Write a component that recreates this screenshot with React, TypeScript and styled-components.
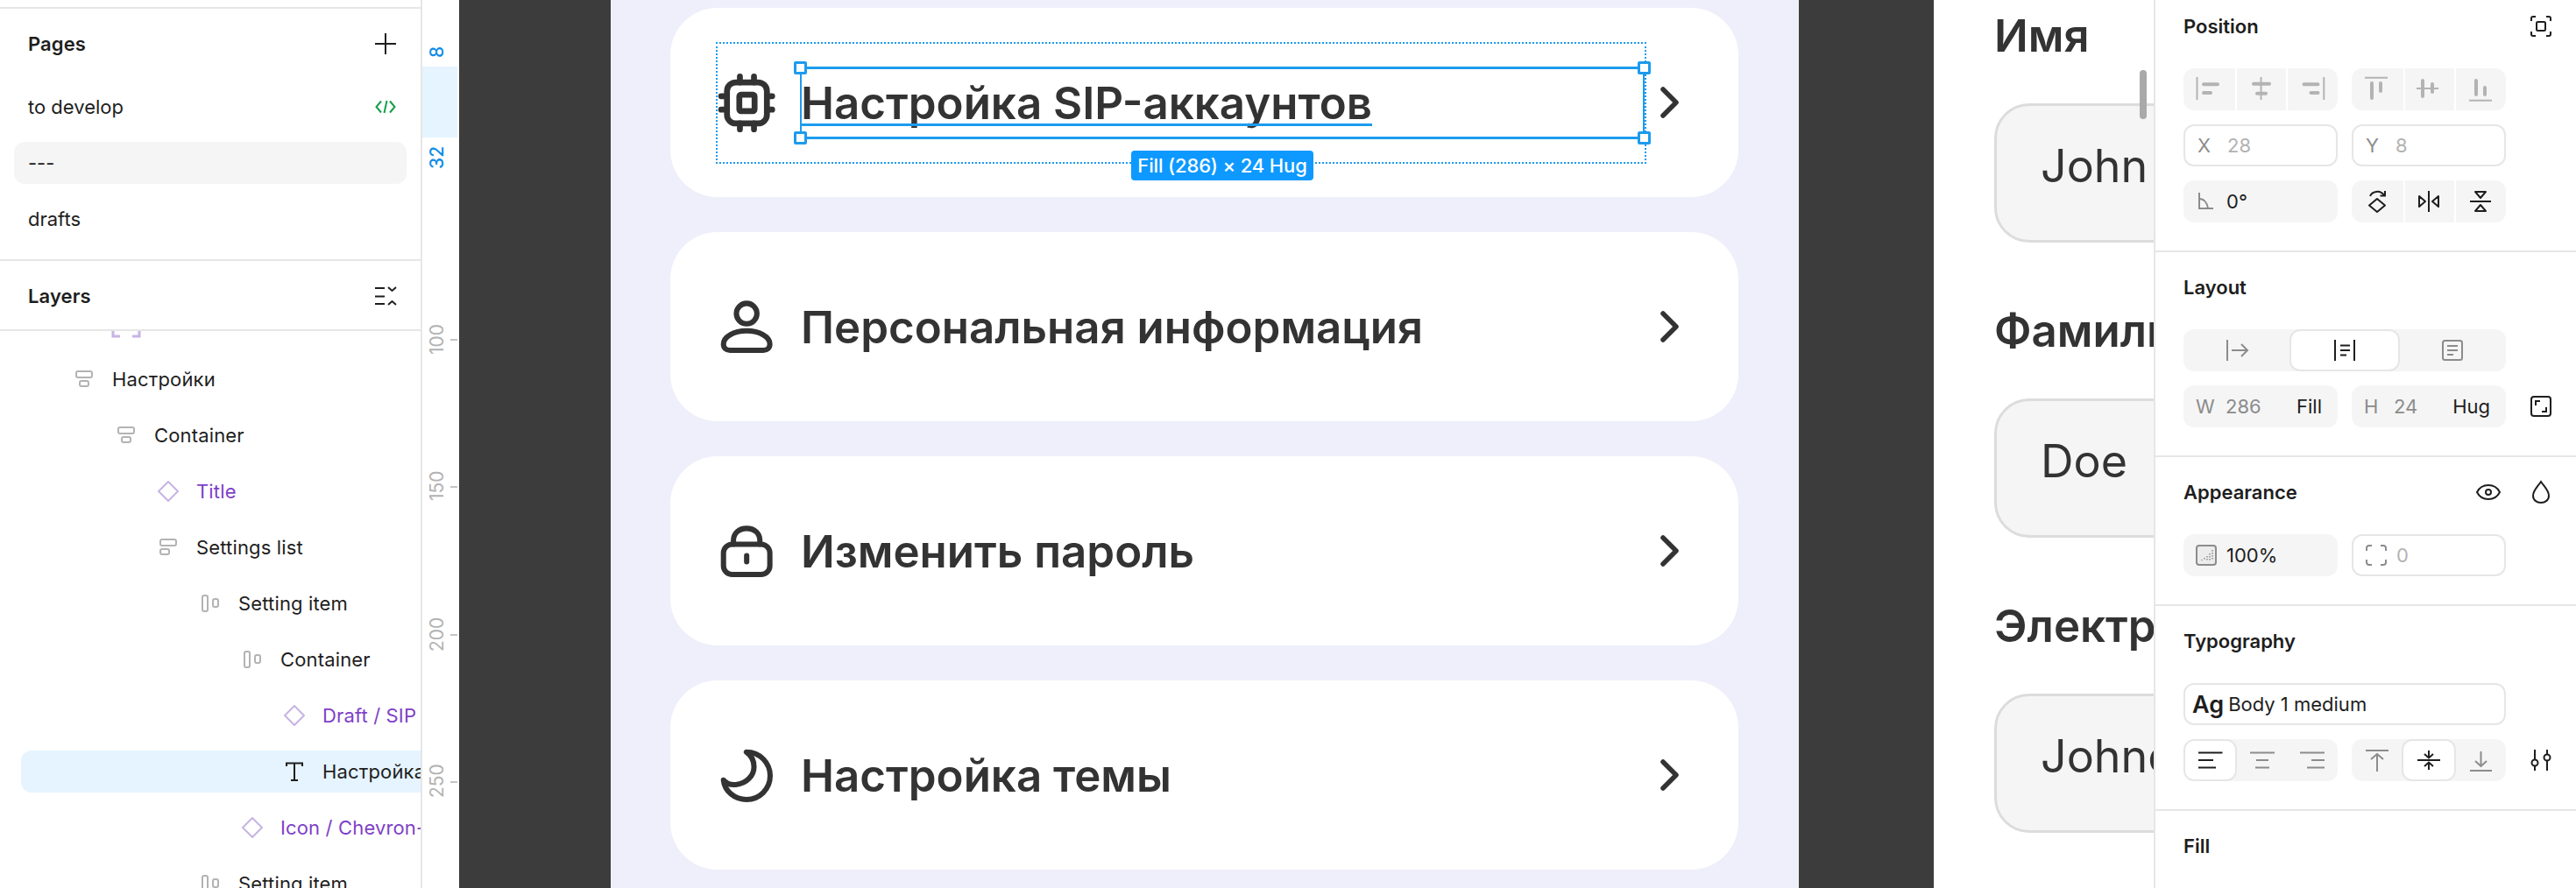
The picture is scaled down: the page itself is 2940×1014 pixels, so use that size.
import React from 'react';
import styled, { createGlobalStyle } from 'styled-components';

const GlobalStyle = createGlobalStyle`
  html, body {
    margin: 0;
    padding: 0;
    background: #ffffff;
    font-family: Inter, "Noto Sans", sans-serif;
    color: #1e1e1e;
  }
  * {
    box-sizing: border-box;
  }
`;

const Root = styled.div`
  display: flex;
  width: 2940px;
  height: 1014px;
  overflow: hidden;
  position: relative;
`;

/* ---------- left panel ---------- */
const LeftPanel = styled.aside`
  width: 482px;
  flex-shrink: 0;
  height: 100%;
  overflow: hidden;
  border-right: 2px solid #e6e6e6;
  display: flex;
  flex-direction: column;
`;
const TopStrip = styled.div`
  height: 10px;
  flex-shrink: 0;
  border-bottom: 2px solid #e6e6e6;
`;
const PagesSection = styled.section`
  height: 288px;
  flex-shrink: 0;
  padding-top: 16px;
  border-bottom: 2px solid #e6e6e6;
`;
const LayersHeader = styled.section`
  height: 80px;
  flex-shrink: 0;
  padding-top: 16px;
  border-bottom: 2px solid #e6e6e6;
`;
const PanelHeader = styled.div`
  height: 48px;
  padding: 0 28px 0 32px;
  display: flex;
  align-items: center;
  justify-content: space-between;
`;
const PanelTitle = styled.h2`
  margin: 0;
  font-size: 22px;
  font-weight: 600;
  letter-spacing: 0.1px;
  color: #1e1e1e;
`;
const PageList = styled.div`
  margin-top: 24px;
  display: flex;
  flex-direction: column;
  gap: 16px;
`;
const PageRow = styled.div<{ $active?: boolean }>`
  height: 48px;
  margin: 0 16px;
  padding: 0 12px 0 16px;
  border-radius: 12px;
  display: flex;
  align-items: center;
  justify-content: space-between;
  font-size: 22px;
  background: ${(p) => (p.$active ? '#f5f5f5' : 'transparent')};
`;
const LayerScroll = styled.div`
  flex: 1;
  min-height: 0;
  overflow: hidden;
`;
const LayerList = styled.div`
  margin-top: -33px;
  display: flex;
  flex-direction: column;
  gap: 16px;
`;
const LayerRow = styled.div<{ $level: number; $selected?: boolean }>`
  height: 48px;
  flex-shrink: 0;
  margin-left: 24px;
  padding-left: ${(p) => 56 + p.$level * 48}px;
  display: flex;
  align-items: center;
  gap: 16px;
  white-space: nowrap;
  border-radius: 12px 0 0 12px;
  background: ${(p) => (p.$selected ? '#e5f4ff' : 'transparent')};
`;
const LayerIconBox = styled.span`
  width: 32px;
  height: 32px;
  flex-shrink: 0;
  display: flex;
  align-items: center;
  justify-content: center;
`;
const LayerName = styled.span<{ $component?: boolean }>`
  font-size: 22px;
  letter-spacing: 0.15px;
  color: ${(p) => (p.$component ? '#7f3fc8' : '#1e1e1e')};
`;

/* ---------- ruler ---------- */
const Ruler = styled.div`
  width: 42px;
  height: 100%;
  flex-shrink: 0;
  position: relative;
  background: #ffffff;
`;
const RulerHighlight = styled.div`
  position: absolute;
  left: 0;
  width: 40px;
  top: 76px;
  height: 81px;
  background: #e5f4ff;
`;
const RulerLabel = styled.span<{ $y: number; $accent?: boolean }>`
  position: absolute;
  left: 4px;
  top: ${(p) => p.$y}px;
  width: 24px;
  height: 60px;
  margin-top: -30px;
  display: flex;
  align-items: center;
  justify-content: center;
  writing-mode: vertical-rl;
  transform: rotate(180deg);
  font-size: 21px;
  font-weight: ${(p) => (p.$accent ? 500 : 400)};
  color: ${(p) => (p.$accent ? '#0d8ce8' : '#b3b3b3')};
`;
const RulerTick = styled.i<{ $y: number }>`
  position: absolute;
  left: 32px;
  width: 8px;
  height: 2px;
  top: ${(p) => p.$y}px;
  background: #c4c4c4;
`;

/* ---------- canvas ---------- */
const Canvas = styled.main`
  flex: 1;
  min-width: 0;
  height: 100%;
  overflow: hidden;
  position: relative;
  background: #3c3c3c;
  display: flex;
  padding-left: 173px;
  gap: 154px;
`;
const Phone = styled.div`
  width: 1356px;
  height: 100%;
  flex-shrink: 0;
  padding: 9px 69px 0 68px;
  background: #efeffb;
  display: flex;
  flex-direction: column;
  gap: 40px;
`;
const Card = styled.div`
  height: 216px;
  flex-shrink: 0;
  padding-left: 54px;
  background: #ffffff;
  border-radius: 54px;
  display: flex;
  align-items: center;
`;
const CardBody = styled.div<{ $selected?: boolean }>`
  width: 1058px;
  flex-shrink: 0;
  height: 135px;
  display: flex;
  align-items: center;
  gap: 27px;
  position: relative;
  outline: ${(p) => (p.$selected ? '2px dotted #1c9bee' : 'none')};
`;
const CardIcon = styled.svg<{ $heavy?: boolean }>`
  width: 67px;
  height: 67px;
  flex-shrink: 0;
  fill: none;
  stroke: #333333;
  stroke-width: ${(p) => (p.$heavy ? 2 : 1.8)};
  stroke-linecap: round;
  stroke-linejoin: round;
`;
const CardText = styled.div<{ $selected?: boolean }>`
  flex: 1;
  height: 83px;
  display: flex;
  align-items: center;
  position: relative;
  text-indent: -1px;
  font-size: 51px;
  font-weight: 600;
  color: #333333;
  border-style: solid;
  border-width: 3px 2px;
  border-color: ${(p) => (p.$selected ? '#1c9bee' : 'transparent')};
`;
const Underlined = styled.span`
  position: relative;
  &::after {
    content: '';
    position: absolute;
    left: -1px;
    right: 0;
    bottom: 4px;
    height: 3px;
    background: #1c9bee;
  }
`;
const Handle = styled.i<{ $right?: boolean; $bottom?: boolean }>`
  position: absolute;
  width: 15px;
  height: 15px;
  background: #ffffff;
  border: 3px solid #1c9bee;
  border-radius: 2px;
  ${(p) => (p.$right ? 'right: -9px;' : 'left: -9px;')}
  ${(p) => (p.$bottom ? 'bottom: -9px;' : 'top: -9px;')}
`;
const SizeTag = styled.span`
  position: absolute;
  left: 50%;
  top: 93px;
  transform: translateX(-50%);
  width: 208px;
  height: 34px;
  display: flex;
  align-items: center;
  justify-content: center;
  background: #0d99ff;
  border-radius: 4px;
  color: #ffffff;
  font-size: 22px;
  font-weight: 500;
  letter-spacing: -0.15px;
  text-indent: 0;
  white-space: nowrap;
`;
const ChevronSvg = styled.svg`
  width: 56px;
  height: 56px;
  flex-shrink: 0;
  fill: none;
  stroke: #333333;
  stroke-width: 5.5;
  stroke-linecap: round;
  stroke-linejoin: round;
`;

/* second frame, runs under the right panel */
const SideFrame = styled.div`
  width: 900px;
  height: 100%;
  flex-shrink: 0;
  padding-left: 69px;
  background: #ffffff;
  display: flex;
  flex-direction: column;
  gap: 60px;
`;
const FieldGroup = styled.div`
  display: flex;
  flex-direction: column;
  gap: 37px;
`;
const FieldLabel = styled.div`
  height: 81px;
  display: flex;
  align-items: center;
  font-size: 51px;
  font-weight: 600;
  color: #333333;
  white-space: nowrap;
`;
const FieldBox = styled.div`
  height: 159px;
  padding: 0 0 16px 50px;
  display: flex;
  align-items: center;
  background: #f5f5f5;
  border: 3px solid #dcdcdc;
  border-radius: 40px;
  font-size: 52px;
  color: #333333;
  white-space: nowrap;
`;
const ScrollThumb = styled.i`
  position: absolute;
  left: 1918px;
  top: 80px;
  width: 8px;
  height: 56px;
  border-radius: 4px;
  background: #a9a9a9;
`;

/* ---------- right panel ---------- */
const RightPanel = styled.aside`
  width: 482px;
  flex-shrink: 0;
  height: 100%;
  overflow: hidden;
  position: relative;
  background: #ffffff;
  border-left: 2px solid #e6e6e6;
  margin-left: -2px;
`;
const Section = styled.section<{ $first?: boolean }>`
  padding: ${(p) => (p.$first ? '6px' : '16px')} 28px 32px 32px;
  border-bottom: 2px solid #e6e6e6;
  &:last-child {
    border-bottom: none;
  }
`;
const SectionHead = styled.div`
  height: 48px;
  margin-bottom: 24px;
  display: flex;
  align-items: center;
  gap: 34px;
`;
const SectionTitle = styled.h3`
  margin: 0 auto 0 0;
  font-size: 22px;
  font-weight: 600;
  color: #1e1e1e;
`;
const Rows = styled.div`
  display: flex;
  flex-direction: column;
  gap: 16px;
`;
const Row = styled.div`
  display: flex;
  align-items: center;
  gap: 16px;
`;
const SideIcon = styled.span`
  display: flex;
  margin-left: 12px;
`;
const Segmented = styled.div<{ $wide?: boolean }>`
  width: ${(p) => (p.$wide ? '368px' : '176px')};
  height: 48px;
  display: flex;
  background: #f5f5f5;
  border-radius: 12px;
  overflow: hidden;
`;
const Segment = styled.div<{ $active?: boolean; $split?: boolean }>`
  flex: 1;
  display: flex;
  align-items: center;
  justify-content: center;
  background: ${(p) => (p.$active ? '#ffffff' : 'transparent')};
  border: ${(p) => (p.$active ? '2px solid #e6e6e6' : 'none')};
  border-radius: ${(p) => (p.$active ? '12px' : '0')};
  ${(p) => (p.$split ? 'box-shadow: 2px 0 0 #ffffff;' : '')}
`;
const Field = styled.div<{ $outlined?: boolean; $wide?: boolean }>`
  width: ${(p) => (p.$wide ? '368px' : '176px')};
  height: 48px;
  padding: 0 12px 0 14px;
  display: flex;
  align-items: center;
  font-size: 22px;
  border-radius: 12px;
  background: ${(p) => (p.$outlined ? '#ffffff' : '#f5f5f5')};
  border: ${(p) => (p.$outlined ? '2px solid #e6e6e6' : 'none')};
`;
const FieldTag = styled.span`
  width: 34px;
  flex-shrink: 0;
  color: #8c8c8c;
`;
const FieldSlot = styled.span`
  width: 35px;
  flex-shrink: 0;
  display: flex;
`;
const FieldValue = styled.span<{ $muted?: 'light' | 'mid' }>`
  color: ${(p) => (p.$muted === 'light' ? '#b3b3b3' : p.$muted === 'mid' ? '#8c8c8c' : '#1e1e1e')};
`;
const FieldSuffix = styled.span`
  margin-left: auto;
  margin-right: 6px;
  color: #1e1e1e;
`;
const AgMark = styled.span`
  font-size: 27px;
  font-weight: 600;
  margin-right: 5px;
  margin-left: -6px;
`;

/* ---------- icons ---------- */
const Svg = styled.svg<{ $tone?: string; $size?: number }>`
  width: ${(p) => p.$size ?? 24}px;
  height: ${(p) => p.$size ?? 24}px;
  flex-shrink: 0;
  overflow: visible;
  fill: none;
  stroke: ${(p) => p.$tone ?? '#1e1e1e'};
  stroke-width: 2;
`;

const dark = '#1e1e1e';
const grey = '#8c8c8c';
const light = '#b3b3b3';

const glyphs: Record<string, React.ReactNode> = {
  plus: <path d="M12 0V24M0 12H24" />,
  code: <path d="M7 5.5L1.5 12L7 18.5M17 5.5L22.5 12L17 18.5M13.5 5L10.5 19" />,
  collapse: (
    <>
      <path d="M0 3H11M0 12.5H11M0 21H11" />
      <path d="M15 2L19.5 6L24 2M15 22L19.5 18L24 22" />
    </>
  ),
  focus: (
    <>
      <path d="M1 6V3a2 2 0 0 1 2-2h3M18 1h3a2 2 0 0 1 2 2v3M23 18v3a2 2 0 0 1-2 2h-3M6 23H3a2 2 0 0 1-2-2v-3" />
      <rect x="7" y="7" width="10" height="10" rx="1.5" />
    </>
  ),
  alignLeft: (
    <>
      <path d="M-1.5 -2V24" />
      <path d="M6 6.3H22M6 16H14" strokeWidth="4" strokeLinecap="round" />
    </>
  ),
  alignCenter: (
    <>
      <path d="M12.5 -2V24" />
      <path d="M4 5.7H22M8 16.7H18" strokeWidth="4" strokeLinecap="round" />
    </>
  ),
  alignRight: (
    <>
      <path d="M25.3 -2V24" />
      <path d="M2.5 6.3H18.5M10.5 16H18.5" strokeWidth="4" strokeLinecap="round" />
    </>
  ),
  alignTop: (
    <>
      <path d="M-2 -1.3H24" />
      <path d="M6 5V22M16 5V14" strokeWidth="4" strokeLinecap="round" />
    </>
  ),
  alignMiddle: (
    <>
      <path d="M-2 11H23" />
      <path d="M5 2V20M16 6V15" strokeWidth="4" strokeLinecap="round" />
    </>
  ),
  alignBottom: (
    <>
      <path d="M-1 24.7H25" />
      <path d="M7 2V18M17 10V18" strokeWidth="4" strokeLinecap="round" />
    </>
  ),
  angle: <path d="M4 2V20H20M4 9C9 9 13 13 14 20" />,
  rotate: (
    <>
      <path d="M12 9L21 16.5L12 24L3 16.5Z" strokeLinejoin="round" />
      <path d="M4 6C6 1 15 -2 20 5M21 0V5.5H15.5" />
    </>
  ),
  flipH: <path d="M12 0V24M1 6L8 12L1 18ZM23 6L16 12L23 18Z" strokeLinejoin="round" />,
  flipV: <path d="M0 12H24M6 1L12 8L18 1ZM6 23L12 16L18 23Z" strokeLinejoin="round" />,
  flowRight: <path d="M1 0V24M6 12H24M17 5L24 12L17 19" />,
  flowWrap: <path d="M1 0V24M23 0V24M7 6.5H18M7 12H18M7 17.5H14" />,
  textBox: (
    <>
      <rect x="1" y="1" width="22" height="22" rx="2.5" />
      <path d="M6 7H18M6 12H18M6 17H13" />
    </>
  ),
  resize: (
    <>
      <rect x="1" y="1" width="22" height="22" rx="3" />
      <path d="M6 11V6H11M18 13V18H13" />
    </>
  ),
  eye: (
    <>
      <path d="M1 10C4 4 8 2 14 2S24 4 27 10C24 16 20 18 14 18S4 16 1 10Z" />
      <circle cx="14" cy="10" r="3" />
    </>
  ),
  drop: <path d="M12 0C8 6 3 10 3 16C3 21 7 24 12 24S21 21 21 16C21 10 16 6 12 0Z" />,
  opacity: (
    <>
      <rect x="1" y="1" width="22" height="22" rx="3" fill="#ececec" />
      <path d="M19 6V18M16 10V18M13 13V18M10 15V18M7 17V18" strokeDasharray="1.5 1.5" strokeWidth="1.5" />
    </>
  ),
  corners: (
    <path d="M1 7V4a3 3 0 0 1 3-3h3M17 1h3a3 3 0 0 1 3 3v3M23 17v3a3 3 0 0 1-3 3h-3M7 23H4a3 3 0 0 1-3-3v-3" />
  ),
  textLeft: <path d="M-2 3.5H25.5M-2 12H15M-2 20.5H18" />,
  textCenter: <path d="M-2 3.5H26M5 12H19M4 20.5H20" />,
  textRight: <path d="M-2 3.5H26M11 12H26M6 20.5H26" />,
  vTop: <path d="M-1 1H25M12 25V5M5 11L12 5L19 11" />,
  vMiddle: <path d="M-1 12H25M12 1V9M7 5L12 9.5L17 5M12 23V15M7 19L12 14.5L17 19" />,
  vBottom: <path d="M0 24H25M12.5 2V19M6 13L12.5 19L19 13" />,
  sliders: (
    <>
      <circle cx="5" cy="15" r="3.5" />
      <circle cx="19" cy="9" r="3.5" />
      <path d="M5 0V11.5M5 18.5V24M19 0V5.5M19 12.5V24" />
    </>
  ),
};

const Icon = ({ name, tone, size }: { name: string; tone?: string; size?: number }) => (
  <Svg viewBox={name === 'eye' ? '0 0 28 20' : '0 0 24 24'} $tone={tone ?? dark} $size={size}>
    {glyphs[name]}
  </Svg>
);

const LayerGlyph = ({ kind }: { kind: string }) => {
  if (kind === 'diamond')
    return (
      <Svg viewBox="0 0 32 32" $tone="#c7b4e3" $size={32}>
        <path d="M16 5L27 16L16 27L5 16Z" strokeLinejoin="round" />
      </Svg>
    );
  if (kind === 'text')
    return (
      <Svg viewBox="0 0 32 32" $size={32}>
        <path d="M7 10V6.5H25V10M16 6.5V26M12 26H20" />
      </Svg>
    );
  if (kind === 'frame')
    return (
      <Svg viewBox="0 0 32 32" $tone="#c7b4e3" $size={32}>
        <path d="M1 9V1H9M23 1H31V9M31 23V31H23M9 31H1V23M12 12L16 16L20 12" strokeWidth="3" />
      </Svg>
    );
  if (kind === 'col')
    return (
      <Svg viewBox="0 0 32 32" $tone={light} $size={32}>
        <rect x="7" y="7" width="18" height="7" rx="2" />
        <rect x="11" y="18" width="10" height="6" rx="2" />
      </Svg>
    );
  if (kind === 'colLeft')
    return (
      <Svg viewBox="0 0 32 32" $tone={light} $size={32}>
        <rect x="7" y="7" width="18" height="7" rx="2" />
        <rect x="7" y="18" width="10" height="6" rx="2" />
      </Svg>
    );
  return (
    <Svg viewBox="0 0 32 32" $tone={light} $size={32}>
      <rect x="7" y="7" width="6" height="18" rx="2" />
      <rect x="19" y="11" width="6" height="9" rx="2" />
    </Svg>
  );
};

const layers = [
  { level: 1, kind: 'frame', name: '' },
  { level: 0, kind: 'col', name: 'Настройки' },
  { level: 1, kind: 'col', name: 'Container' },
  { level: 2, kind: 'diamond', name: 'Title', component: true },
  { level: 2, kind: 'colLeft', name: 'Settings list' },
  { level: 3, kind: 'row', name: 'Setting item' },
  { level: 4, kind: 'row', name: 'Container' },
  { level: 5, kind: 'diamond', name: 'Draft / SIP', component: true },
  { level: 5, kind: 'text', name: 'Настройка SIP-аккаунтов', selected: true },
  { level: 4, kind: 'diamond', name: 'Icon / Chevron-right', component: true },
  { level: 3, kind: 'row', name: 'Setting item' },
];

const ChipIcon = () => (
  <CardIcon viewBox="0 0 20 20" $heavy>
    <rect x="3.2" y="3" width="13.6" height="14" rx="3" />
    <rect x="7.4" y="7.2" width="5.2" height="5.6" rx="0.6" />
    <path d="M7.6 1V3M12.4 1V3M7.6 17V19M12.4 17V19M1.2 7.7H3.2M1.2 12.3H3.2M16.8 7.7H18.6M16.8 12.3H18.6" />
  </CardIcon>
);
const PersonIcon = () => (
  <CardIcon viewBox="0 0 20 20">
    <circle cx="9.9" cy="5.4" r="3.5" />
    <path d="M9.9 11.3C5.4 11.3 2 13.4 2 15.8C2 17.1 2.9 17.9 4.2 17.9H15.6C16.9 17.9 17.8 17.1 17.8 15.8C17.8 13.4 14.4 11.3 9.9 11.3Z" />
  </CardIcon>
);
const LockIcon = () => (
  <CardIcon viewBox="0 0 20 20">
    <rect x="2" y="7.6" width="15.8" height="10.3" rx="3" />
    <path d="M5.4 7.6V6.3C5.4 3.8 7.4 2.2 9.9 2.2C12.4 2.2 14.4 3.8 14.4 6.3V7.6" />
    <path d="M9.9 11.5V13.6" />
  </CardIcon>
);
const MoonIcon = () => (
  <CardIcon viewBox="0 0 20 20">
    <path d="M9.8 2C14.4 2 17.9 5.7 17.9 10.1C17.9 14.6 14.3 18.2 9.9 18.2C5.8 18.2 2.4 15.4 2 11.6C3 12.7 4.6 13.3 6.2 13.1C10 12.8 12.4 9.9 12.4 7C12.4 5 11.5 3.2 9.8 2Z" />
  </CardIcon>
);
const Chevron = () => (
  <ChevronSvg viewBox="0 0 56 56">
    <path d="M21 13L36 28L21 43" />
  </ChevronSvg>
);

export default function App() {
  return (
    <>
      <GlobalStyle />
      <Root>
        <LeftPanel>
          <TopStrip />
          <PagesSection>
            <PanelHeader>
              <PanelTitle>Pages</PanelTitle>
              <Icon name="plus" />
            </PanelHeader>
            <PageList>
              <PageRow>
                to develop
                <Icon name="code" tone="#14a04a" />
              </PageRow>
              <PageRow $active>---</PageRow>
              <PageRow>drafts</PageRow>
            </PageList>
          </PagesSection>
          <LayersHeader>
            <PanelHeader>
              <PanelTitle>Layers</PanelTitle>
              <Icon name="collapse" />
            </PanelHeader>
          </LayersHeader>
          <LayerScroll>
            <LayerList>
              {layers.map((layer, i) => (
                <LayerRow key={i} $level={layer.level} $selected={layer.selected}>
                  <LayerIconBox>
                    <LayerGlyph kind={layer.kind} />
                  </LayerIconBox>
                  <LayerName $component={layer.component}>{layer.name}</LayerName>
                </LayerRow>
              ))}
            </LayerList>
          </LayerScroll>
        </LeftPanel>

        <Ruler>
          <RulerHighlight />
          <RulerLabel $y={59} $accent>8</RulerLabel>
          <RulerLabel $y={180} $accent>32</RulerLabel>
          {[
            [100, 387],
            [150, 555],
            [200, 724],
            [250, 892],
          ].map(([label, y]) => (
            <React.Fragment key={label}>
              <RulerLabel $y={y}>{label}</RulerLabel>
              <RulerTick $y={y} />
            </React.Fragment>
          ))}
        </Ruler>

        <Canvas>
          <Phone>
            <Card>
              <CardBody $selected>
                <ChipIcon />
                <CardText $selected>
                  <Underlined>Настройка SIP-аккаунтов</Underlined>
                  <Handle />
                  <Handle $right />
                  <Handle $bottom />
                  <Handle $right $bottom />
                  <SizeTag>Fill (286) × 24 Hug</SizeTag>
                </CardText>
              </CardBody>
              <Chevron />
            </Card>
            <Card>
              <CardBody>
                <PersonIcon />
                <CardText>Персональная информация</CardText>
              </CardBody>
              <Chevron />
            </Card>
            <Card>
              <CardBody>
                <LockIcon />
                <CardText>Изменить пароль</CardText>
              </CardBody>
              <Chevron />
            </Card>
            <Card>
              <CardBody>
                <MoonIcon />
                <CardText>Настройка темы</CardText>
              </CardBody>
              <Chevron />
            </Card>
          </Phone>
          <SideFrame>
            <FieldGroup>
              <FieldLabel>Имя</FieldLabel>
              <FieldBox>John</FieldBox>
            </FieldGroup>
            <FieldGroup>
              <FieldLabel>Фамилия</FieldLabel>
              <FieldBox>Doe</FieldBox>
            </FieldGroup>
            <FieldGroup>
              <FieldLabel>Электронная почта</FieldLabel>
              <FieldBox>Johndoe@example.com</FieldBox>
            </FieldGroup>
          </SideFrame>
          <ScrollThumb />
        </Canvas>

        <RightPanel>
          <Section $first>
            <SectionHead>
              <SectionTitle>Position</SectionTitle>
              <Icon name="focus" />
            </SectionHead>
            <Rows>
              <Row>
                <Segmented>
                  <Segment $split><Icon name="alignLeft" tone={light} /></Segment>
                  <Segment $split><Icon name="alignCenter" tone={light} /></Segment>
                  <Segment><Icon name="alignRight" tone={light} /></Segment>
                </Segmented>
                <Segmented>
                  <Segment $split><Icon name="alignTop" tone={light} /></Segment>
                  <Segment $split><Icon name="alignMiddle" tone={light} /></Segment>
                  <Segment><Icon name="alignBottom" tone={light} /></Segment>
                </Segmented>
              </Row>
              <Row>
                <Field $outlined>
                  <FieldTag>X</FieldTag>
                  <FieldValue $muted="light">28</FieldValue>
                </Field>
                <Field $outlined>
                  <FieldTag>Y</FieldTag>
                  <FieldValue $muted="light">8</FieldValue>
                </Field>
              </Row>
              <Row>
                <Field>
                  <FieldSlot><Icon name="angle" tone={grey} /></FieldSlot>
                  <FieldValue>0°</FieldValue>
                </Field>
                <Segmented>
                  <Segment $split><Icon name="rotate" /></Segment>
                  <Segment $split><Icon name="flipH" /></Segment>
                  <Segment><Icon name="flipV" /></Segment>
                </Segmented>
              </Row>
            </Rows>
          </Section>

          <Section>
            <SectionHead>
              <SectionTitle>Layout</SectionTitle>
            </SectionHead>
            <Rows>
              <Row>
                <Segmented $wide>
                  <Segment><Icon name="flowRight" tone={grey} /></Segment>
                  <Segment $active><Icon name="flowWrap" /></Segment>
                  <Segment><Icon name="textBox" tone={grey} /></Segment>
                </Segmented>
              </Row>
              <Row>
                <Field>
                  <FieldTag>W</FieldTag>
                  <FieldValue $muted="mid">286</FieldValue>
                  <FieldSuffix>Fill</FieldSuffix>
                </Field>
                <Field>
                  <FieldTag>H</FieldTag>
                  <FieldValue $muted="mid">24</FieldValue>
                  <FieldSuffix>Hug</FieldSuffix>
                </Field>
                <SideIcon><Icon name="resize" /></SideIcon>
              </Row>
            </Rows>
          </Section>

          <Section>
            <SectionHead>
              <SectionTitle>Appearance</SectionTitle>
              <Icon name="eye" size={28} />
              <Icon name="drop" />
            </SectionHead>
            <Rows>
              <Row>
                <Field>
                  <FieldSlot><Icon name="opacity" tone={grey} /></FieldSlot>
                  <FieldValue>100%</FieldValue>
                </Field>
                <Field $outlined>
                  <FieldSlot><Icon name="corners" tone={grey} /></FieldSlot>
                  <FieldValue $muted="light">0</FieldValue>
                </Field>
              </Row>
            </Rows>
          </Section>

          <Section>
            <SectionHead>
              <SectionTitle>Typography</SectionTitle>
            </SectionHead>
            <Rows>
              <Row>
                <Field $outlined $wide>
                  <AgMark>Ag</AgMark>
                  <FieldValue>Body 1 medium</FieldValue>
                </Field>
              </Row>
              <Row>
                <Segmented>
                  <Segment $active><Icon name="textLeft" /></Segment>
                  <Segment><Icon name="textCenter" tone={grey} /></Segment>
                  <Segment><Icon name="textRight" tone={grey} /></Segment>
                </Segmented>
                <Segmented>
                  <Segment><Icon name="vTop" tone={grey} /></Segment>
                  <Segment $active><Icon name="vMiddle" /></Segment>
                  <Segment><Icon name="vBottom" tone={grey} /></Segment>
                </Segmented>
                <SideIcon><Icon name="sliders" /></SideIcon>
              </Row>
            </Rows>
          </Section>

          <Section>
            <SectionHead>
              <SectionTitle>Fill</SectionTitle>
            </SectionHead>
          </Section>
        </RightPanel>
      </Root>
    </>
  );
}
